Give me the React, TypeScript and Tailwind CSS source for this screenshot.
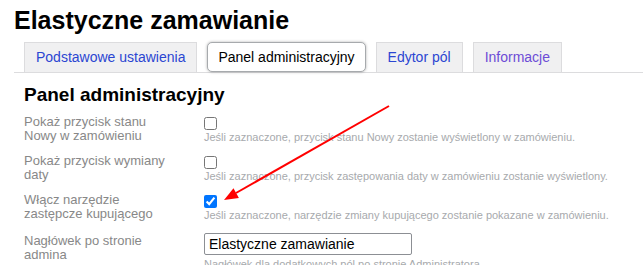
const rows = [
  {
    label: "Pokaż przycisk stanu Nowy w zamówieniu",
    help: "Jeśli zaznaczone, przycisk stanu Nowy zostanie wyświetlony w zamówieniu.",
    checked: false,
  },
  {
    label: "Pokaż przycisk wymiany daty",
    help: "Jeśli zaznaczone, przycisk zastępowania daty w zamówieniu zostanie wyświetlony.",
    checked: false,
  },
  {
    label: "Włącz narzędzie zastępcze kupującego",
    help: "Jeśli zaznaczone, narzędzie zmiany kupującego zostanie pokazane w zamówieniu.",
    checked: true,
  },
];

const tabs = [
  { name: "Podstawowe ustawienia", color: "text-[#2b46d2]" },
  { name: "Panel administracyjny", active: true },
  { name: "Edytor pól", color: "text-[#2b46d2]" },
  { name: "Informacje", color: "text-[#6d4cd6]" },
];

export default function App() {
  return (
    <div className="relative h-[265px] w-[643px] overflow-hidden bg-white font-['Liberation_Sans',Arial,sans-serif]">
      <h1 className="ml-[14px] pt-[5px] text-[25px] font-bold leading-[30px] text-black">
        Elastyczne zamawianie
      </h1>

      <nav className="ml-[14px] mt-[7px] flex h-[31px] items-start gap-[10px] border-b border-[#dcdcde] pl-[10px]">
        {tabs.map((tab) =>
          tab.active ? (
            <span
              key={tab.name}
              className="flex h-[30px] items-center rounded-[5px] border border-[#a7aaad] bg-white px-[10px] text-[14px] text-black shadow-[0_0_3px_rgba(0,0,0,0.3)]"
            >
              {tab.name}
            </span>
          ) : (
            <a
              key={tab.name}
              className={`flex h-[30px] items-center border border-b-0 border-[#dcdcde] bg-[#f0f0f1] px-[11px] text-[14px] ${tab.color}`}
            >
              {tab.name}
            </a>
          )
        )}
      </nav>

      <section className="px-[24px]">
        <h2 className="mt-[10px] text-[19px] font-bold leading-[24px] text-black">
          Panel administracyjny
        </h2>

        <div className="mt-[7px] flex flex-col gap-[9px]">
          {rows.map((row) => (
            <div key={row.label} className="grid grid-cols-[180px_1fr]">
              <label className="w-[152px] pt-[1px] text-[13px] leading-[14px] text-[#888888]">
                {row.label}
              </label>
              <div className="pt-[3px]">
                <input
                  type="checkbox"
                  defaultChecked={row.checked}
                  className="m-0 block h-[13px] w-[13px]"
                />
                <p className="text-[11px] leading-[14px] text-[#a7aaad]">
                  {row.help}
                </p>
              </div>
            </div>
          ))}

          <div className="grid grid-cols-[180px_1fr]">
            <label className="w-[152px] pt-[3px] text-[13px] leading-[14px] text-[#888888]">
              Nagłówek po stronie admina
            </label>
            <div className="pt-[2px]">
              <input
                type="text"
                defaultValue="Elastyczne zamawianie"
                className="block h-[22px] w-[208px] rounded-[2px] border border-[#8c8f94] px-[4px] text-[14px] text-black outline-none"
              />
              <p className="mt-[2px] text-[11px] leading-[14px] text-[#a7aaad]">
                Nagłówek dla dodatkowych pól po stronie Administratora
              </p>
            </div>
          </div>
        </div>
      </section>

      <svg
        className="pointer-events-none absolute left-0 top-0"
        width="643"
        height="265"
        viewBox="0 0 643 265"
      >
        <line x1="389" y1="106" x2="236" y2="193" stroke="#ff0000" strokeWidth="2" />
        <polygon points="224,200 238.9,197.9 233.5,188.3" fill="#ff0000" />
      </svg>
    </div>
  );
}
